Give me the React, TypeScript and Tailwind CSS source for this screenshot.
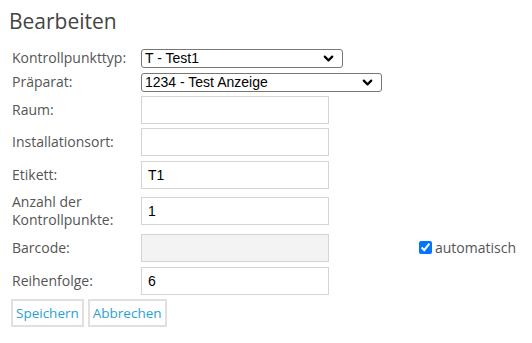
import { ChevronDown } from 'lucide-react'

const labelCls = 'w-[141px] shrink-0 pl-[12px] text-[14px] leading-[18px] text-[#555555]'
const inputCls =
  'w-[188px] h-[28px] border border-[#d4d4d4] px-[6px] text-[14px] text-black font-["Liberation_Sans",Arial,sans-serif] outline-none'

// Auswahlfeld wie der Standard-Select vom Browser
function SelectBox({ value, width }: { value: string; width: string }) {
  return (
    <div
      className={`${width} h-[19px] flex items-center justify-between rounded-[3px] border border-[#767676] bg-white pl-[3px] pr-[6px] text-[14px] text-black font-["Liberation_Sans",Arial,sans-serif]`}
    >
      <span>{value}</span>
      <ChevronDown className="h-[15px] w-[15px] text-black" strokeWidth={3.5} />
    </div>
  )
}

function Row({ label, height, children }: { label: React.ReactNode; height: string; children: React.ReactNode }) {
  return (
    <div className={`flex items-center ${height}`}>
      <div className={labelCls}>{label}</div>
      {children}
    </div>
  )
}

export default function App() {
  return (
    <div className="w-[532px] h-[343px] bg-white font-['Open_Sans',sans-serif]">
      <h1 className="pl-[9px] pt-[7px] text-[21px] leading-[28px] text-[#444444]">Bearbeiten</h1>

      <div className="mt-[11px] flex flex-col">
        <Row label="Kontrollpunkttyp:" height="h-[24px]">
          <SelectBox value="T - Test1" width="w-[202px]" />
        </Row>
        <Row label="Präparat:" height="h-[24px]">
          <SelectBox value="1234 - Test Anzeige" width="w-[241px]" />
        </Row>
        <Row label="Raum:" height="h-[32px]">
          <input className={`${inputCls} bg-white`} defaultValue="" />
        </Row>
        <Row label="Installationsort:" height="h-[32px]">
          <input className={`${inputCls} bg-white`} defaultValue="" />
        </Row>
        <Row label="Etikett:" height="h-[33px]">
          <input className={`${inputCls} bg-white`} defaultValue="T1" />
        </Row>
        <Row
          label={
            <>
              Anzahl der
              <br />
              Kontrollpunkte:
            </>
          }
          height="h-[39px]"
        >
          <input className={`${inputCls} bg-white`} defaultValue="1" />
        </Row>
        <Row label="Barcode:" height="h-[35px]">
          <input className={`${inputCls} bg-[#f3f3f3]`} disabled defaultValue="" />
          <label className="ml-[90px] flex items-center gap-[3px] text-[14px] text-[#555555]">
            <input type="checkbox" defaultChecked className="h-[13px] w-[13px] accent-[#0075ff]" />
            automatisch
          </label>
        </Row>
        <Row label="Reihenfolge:" height="h-[31px]">
          <input className={`${inputCls} bg-white`} defaultValue="6" />
        </Row>
      </div>

      <div className="mt-[3px] flex gap-[4px] pl-[11px]">
        <button className="h-[28px] border-2 border-[#e0e0e0] bg-white px-[3px] text-[13.5px] text-[#2a9fd6]">Speichern</button>
        <button className="h-[28px] border-2 border-[#e0e0e0] bg-white px-[3px] text-[13.5px] text-[#2a9fd6]">Abbrechen</button>
      </div>
    </div>
  )
}
